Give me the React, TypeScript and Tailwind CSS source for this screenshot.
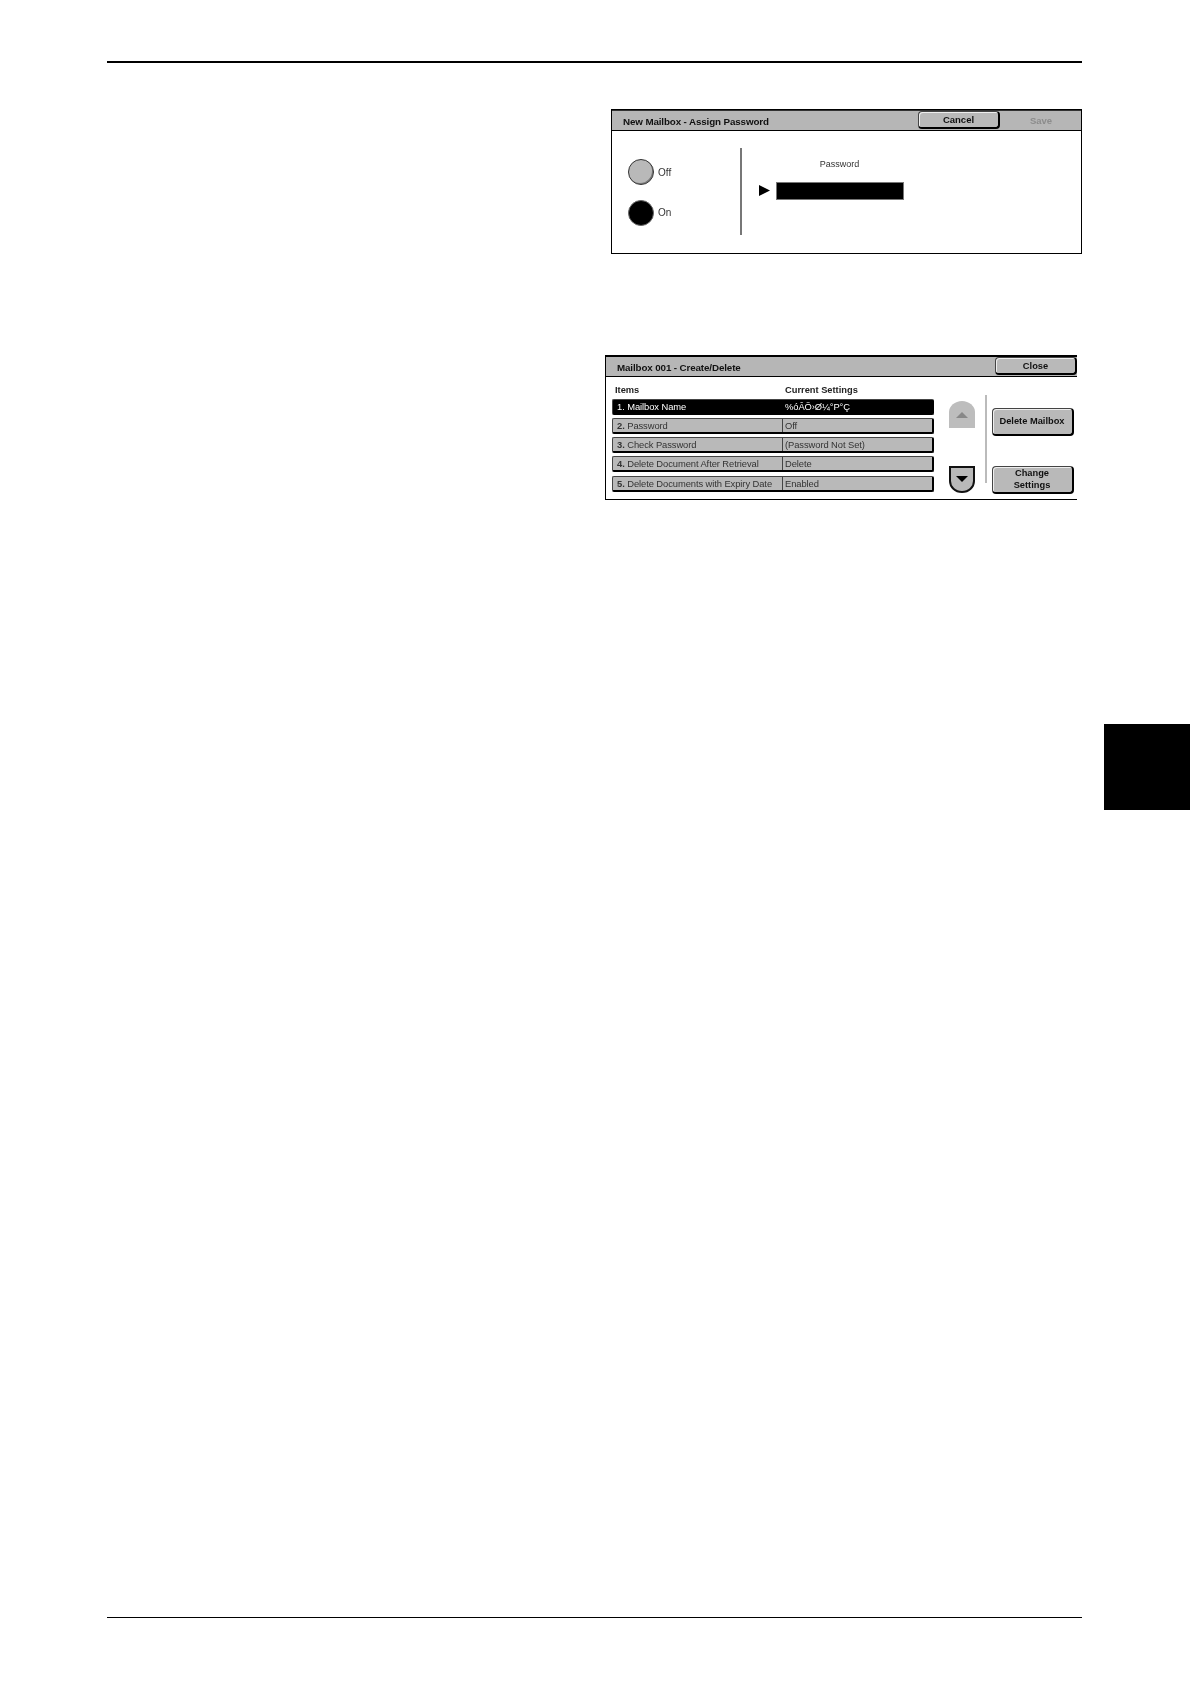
import React from 'react';

const font = "font-['Liberation_Sans',Arial,sans-serif]";

const rows = [
  { no: '1.', name: 'Mailbox Name', value: '%óÂÕ›Ø¼°P°Ç', selected: true },
  { no: '2.', name: 'Password', value: 'Off' },
  { no: '3.', name: 'Check Password', value: '(Password Not Set)' },
  { no: '4.', name: 'Delete Document After Retrieval', value: 'Delete' },
  { no: '5.', name: 'Delete Documents with Expiry Date', value: 'Enabled' },
];

const PanelButton = ({ className, children }: { className: string; children: React.ReactNode }) => (
  <div
    className={`flex items-center justify-center rounded-[4px] border border-[#444] border-r-2 border-b-2 border-r-black border-b-black bg-[#b9b9b9] text-center font-bold leading-[12px] text-[#111] shadow-[inset_1px_1px_0_#eee] ${className}`}
  >
    {children}
  </div>
);

const AssignPassword = () => (
  <div className="h-[145px] w-[471px] self-end border border-black bg-white blur-[0.3px]">
    <div className="flex h-[21px] items-center border-b border-black border-t border-t-[#333] bg-[#b6b6b6] pl-[11px]">
      <span className="w-[295px] pt-[4px] text-[9.8px] font-bold tracking-[-0.12px] text-[#111]">New Mailbox - Assign Password</span>
      <PanelButton className="h-[18px] w-[82px] text-[9.5px]">Cancel</PanelButton>
      <span className="ml-[8px] w-[66px] pt-[2px] text-center text-[9.5px] font-bold text-[#8c8c8c]">Save</span>
    </div>
    <div className="flex">
      <div className="w-[128px] pl-[16px] pt-[28px]">
        <div className="flex items-center gap-[4px] text-[10px] text-[#333]">
          <div className="h-[26px] w-[26px] rounded-full border-[1.5px] border-[#333] bg-[#b9b9b9] shadow-[inset_-1px_-1px_0_#777]" />
          <span className="pt-[1px]">Off</span>
        </div>
        <div className="mt-[15px] flex items-center gap-[4px] text-[10px] text-[#333]">
          <div className="h-[26px] w-[26px] rounded-full border border-[#666] bg-black" />
          On
        </div>
      </div>
      <div className="mt-[17px] h-[87px] w-[1.5px] bg-[#777]" />
      <div className="pl-[17px] pt-[27px]">
        <div className="ml-[17px] w-[128px] text-center text-[9px] leading-[12px] text-[#333]">Password</div>
        <div className="mt-[12px] flex items-center gap-[6px]">
          <svg width="11" height="11" viewBox="0 0 11 11">
            <path d="M0 0 L11 5.5 L0 11 Z" fill="#000" />
          </svg>
          <div className="h-[18px] w-[128px] border border-[#777] bg-black" />
        </div>
      </div>
    </div>
  </div>
);

const CreateDelete = () => (
  <div className="mr-[5px] h-[145px] w-[472px] self-end border border-t-2 border-r-0 border-black bg-white blur-[0.3px]">
    <div className="flex h-[20px] items-center justify-between border-b border-black bg-[#b6b6b6] pl-[11px]">
      <span className="pt-[4px] text-[9.8px] font-bold tracking-[-0.12px] text-[#111]">Mailbox 001 - Create/Delete</span>
      <PanelButton className="h-[18px] w-[82px] text-[9.3px]">Close</PanelButton>
    </div>
    <div className="flex items-start pl-[6px]">
      <div className="w-[322px] pt-[7px]">
        <div className="flex h-[15px] items-center pl-[3px] text-[9.3px] font-bold text-[#222]">
          <span className="w-[170px]">Items</span>
          <span>Current Settings</span>
        </div>
        <div className="flex flex-col gap-[3.25px]">
          {rows.map((r) => (
            <div
              key={r.no}
              className={`flex h-[16px] items-center rounded-[2px] border border-[#444] border-r-2 border-b-2 border-r-black border-b-black text-[9.4px] tracking-[-0.08px] ${
                r.selected ? 'bg-black text-white' : 'bg-[#b9b9b9] text-[#333]'
              }`}
            >
              <div className={`h-full w-[170px] whitespace-nowrap border-r pl-[4px] leading-[14px] ${r.selected ? 'border-black' : 'border-[#444]'}`}>
                <span className={r.selected ? '' : 'font-bold'}>{r.no}</span> {r.name}
              </div>
              <div className="h-full pl-[2px] leading-[14px]">{r.value}</div>
            </div>
          ))}
        </div>
      </div>
      <div className="ml-[15px] mt-[24px] flex h-[92px] w-[26px] flex-col justify-between">
        <svg width="26" height="27" viewBox="0 0 26 27">
          <path d="M0 27 V11 C0 5 6 0 13 0 C20 0 26 5 26 11 V27 Z" fill="#bdbdbd" />
          <path d="M7 17 L13 11 L19 17 Z" fill="#888" />
        </svg>
        <svg width="26" height="27" viewBox="0 0 26 27">
          <path d="M1 1 H25 V15 C25 21 20 26 13 26 C6 26 1 21 1 15 Z" fill="#b9b9b9" stroke="#111" strokeWidth="2" />
          <path d="M7 10 H19 L13 16 Z" fill="#000" />
        </svg>
      </div>
      <div className="ml-[10px] mt-[18px] h-[88px] w-[1.5px] bg-[#bbb]" />
      <div className="ml-[5px] mt-[31px] flex h-[86px] w-[82px] flex-col justify-between">
        <PanelButton className="h-[28px] text-[9.3px]">Delete Mailbox</PanelButton>
        <PanelButton className="h-[28px] text-[9.3px]">Change<br />Settings</PanelButton>
      </div>
    </div>
  </div>
);

export default function App() {
  return (
    <div className={`flex h-[1684px] w-[1190px] overflow-hidden bg-white pl-[107px] ${font}`}>
      <div className="flex w-[975px] flex-col pt-[61px]">
        <div className="h-[1.5px] bg-black" />
        <div className="mt-[46px] flex flex-col">
          <AssignPassword />
        </div>
        <div className="mt-[101px] flex flex-col">
          <CreateDelete />
        </div>
        <div className="mb-[66px] mt-auto h-[1.5px] bg-black" />
      </div>
      <div className="ml-[22px] mt-[724px] h-[86px] w-[86px] bg-black" />
    </div>
  );
}
